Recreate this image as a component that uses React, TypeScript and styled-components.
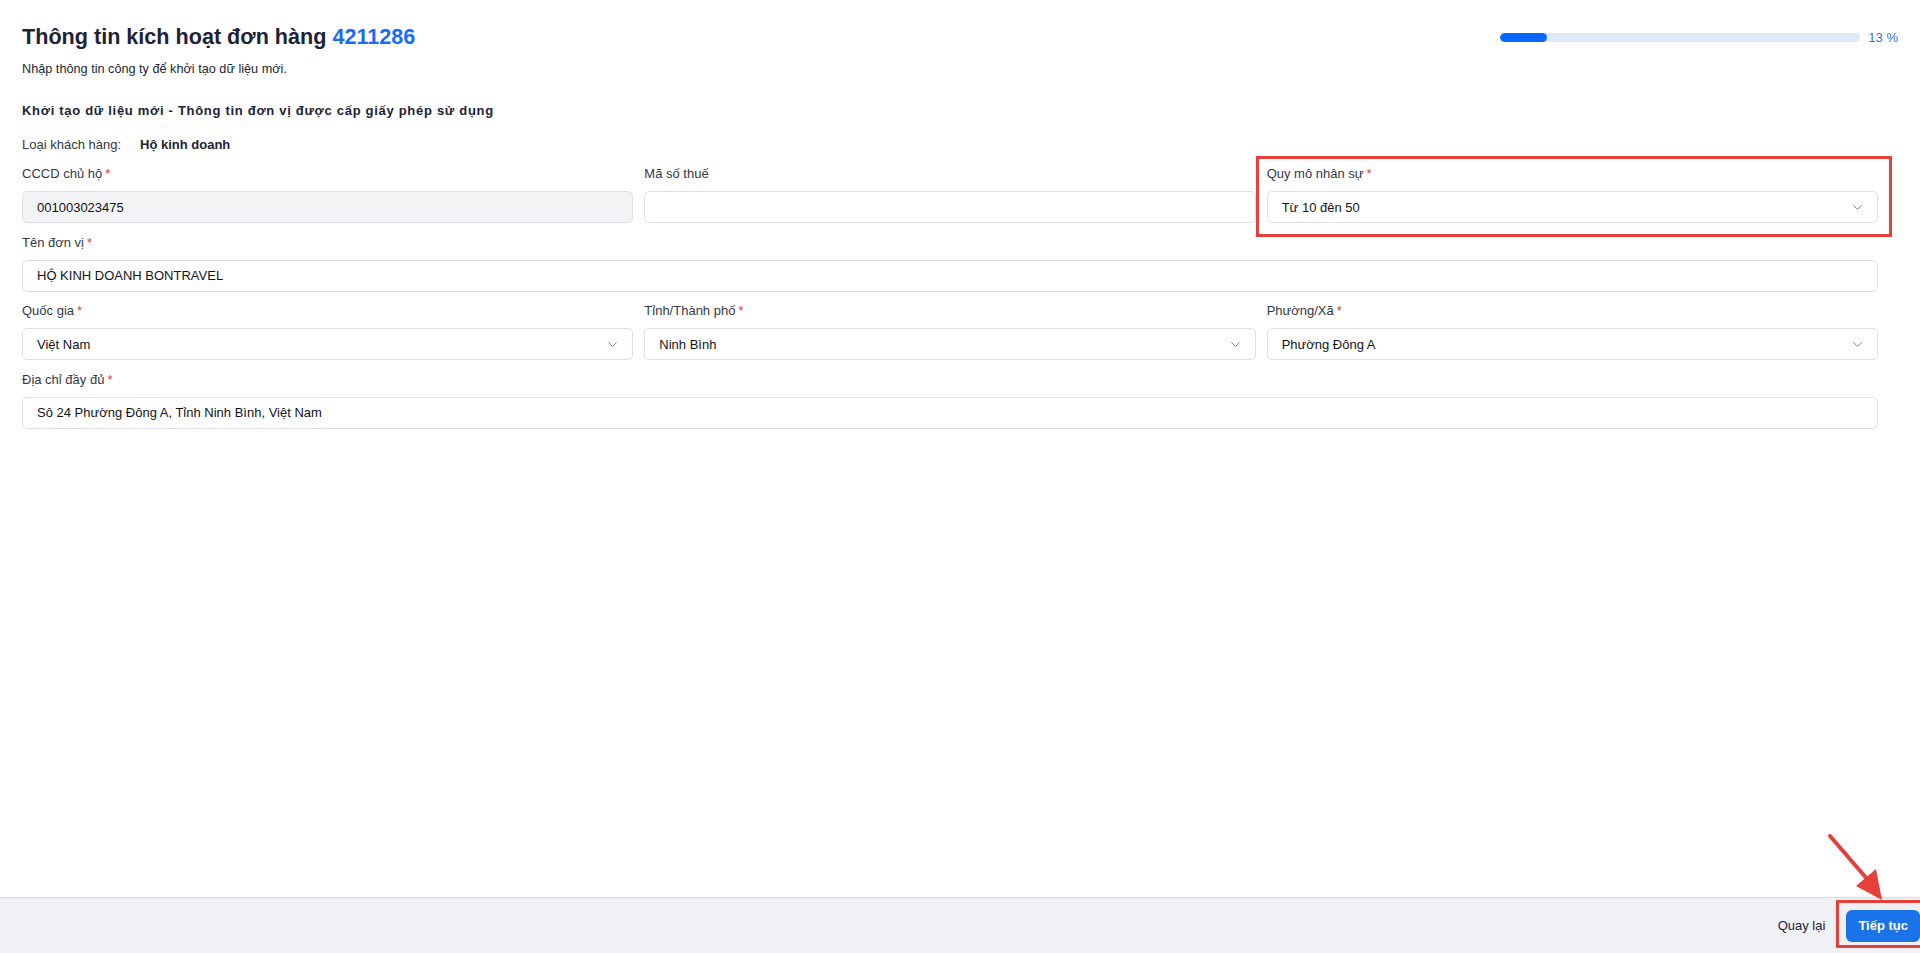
import React from 'react';
import styled, { createGlobalStyle } from 'styled-components';
import { ChevronDown } from 'lucide-react';

const GlobalStyle = createGlobalStyle`
    * { box-sizing: border-box; }
    html, body {
        margin: 0;
        padding: 0;
        background: #ffffff;
        font-family: "Liberation Sans", Arial, sans-serif;
        color: #1d2236;
    }
`

const Page = styled.div`
    min-height: 100vh;
    display: flex;
    flex-direction: column;
`

const Main = styled.main`
    flex: 1;
    padding: 23px 22px 0 22px;
`

const Header = styled.div`
    display: flex;
    justify-content: space-between;
    align-items: center;
`

const Title = styled.h1`
    margin: 0;
    font-size: 21.6px;
    line-height: 28px;
    font-weight: 700;
    color: #1d2236;
`

const OrderNo = styled.span`
    color: #1a6cf5;
`

const Progress = styled.div`
    display: flex;
    align-items: center;
    gap: 8px;
`

const Track = styled.div`
    width: 360px;
    height: 9px;
    border-radius: 5px;
    background: #dce8fc;
    overflow: hidden;
`

const Fill = styled.div`
    height: 100%;
    border-radius: 5px;
    background: #0b66ff;
`

const Percent = styled.span`
    font-size: 13px;
    color: #2f6ff0;
`

const Subtitle = styled.p`
    margin: 9px 0 0;
    font-size: 12.7px;
    line-height: 18px;
    color: #222631;
`

const SectionTitle = styled.h2`
    margin: 24px 0 0;
    font-size: 13px;
    line-height: 18px;
    font-weight: 700;
    letter-spacing: 0.7px;
    color: #1d2236;
`

const InfoRow = styled.div`
    display: flex;
    margin-top: 16px;
    font-size: 13px;
    line-height: 18px;
`

const InfoLabel = styled.span`
    width: 118px;
    color: #333844;
`

const InfoValue = styled.span`
    font-weight: 700;
    color: #1d2236;
`

const Form = styled.div`
    display: grid;
    grid-template-columns: repeat(3, 1fr);
    column-gap: 11px;
    row-gap: 10.5px;
    margin: 11px 20px 0 0;
`

const Field = styled.div<{ $full?: boolean }>`
    position: relative;
    display: flex;
    flex-direction: column;
    grid-column: ${p => (p.$full ? '1 / -1' : 'auto')};
`

const Label = styled.label`
    font-size: 13px;
    line-height: 18px;
    margin-bottom: 8px;
    color: #333844;
`

const Required = styled.span`
    color: #e5393a;
    margin-left: 3px;
`

const Control = styled.div<{ $disabled?: boolean }>`
    height: 32px;
    display: flex;
    align-items: center;
    justify-content: space-between;
    padding: 0 12px 0 14px;
    border: 1px solid #dcdfe4;
    border-radius: 5px;
    background: ${p => (p.$disabled ? '#f3f4f6' : '#ffffff')};
    font-size: 13px;
    color: #111318;
`

const Chevron = styled(ChevronDown)`
    color: #7d828b;
    flex-shrink: 0;
`

// annotation box drawn over the screenshot
const Highlight = styled.div<{ $inset: string }>`
    position: absolute;
    inset: ${p => p.$inset};
    border: 3px solid #e5403a;
    pointer-events: none;
`

const Footer = styled.footer`
    height: 56px;
    display: flex;
    justify-content: flex-end;
    align-items: center;
    gap: 21px;
    padding-right: 0;
    background: #f0f1f4;
    border-top: 1px solid #d9dbe0;
`

const BackButton = styled.button`
    border: none;
    background: none;
    padding: 0;
    font-family: inherit;
    font-size: 13px;
    color: #1d2236;
    cursor: pointer;
`

const NextWrap = styled.div`
    position: relative;
`

const NextButton = styled.button`
    height: 32px;
    padding: 0 12px;
    border: none;
    border-radius: 6px;
    background: #1a73e8;
    color: #ffffff;
    font-family: inherit;
    font-size: 13px;
    font-weight: 700;
    cursor: pointer;
`

const Arrow = styled.svg`
    position: absolute;
    left: -20px;
    top: -78px;
    overflow: visible;
`

type FieldProps = {
    label: string;
    value?: string;
    required?: boolean;
    select?: boolean;
    disabled?: boolean;
    full?: boolean;
    highlight?: boolean;
}

const FormField = ({ label, value, required, select, disabled, full, highlight }: FieldProps) => (
    <Field $full={full}>
        <Label>
            {label}
            {required && <Required>*</Required>}
        </Label>
        <Control $disabled={disabled}>
            <span>{value}</span>
            {select && <Chevron size={15} strokeWidth={1.6} />}
        </Control>
        {highlight && <Highlight $inset="-9px -14px -14px -11px" />}
    </Field>
)

const progress = 13

export default function App() {
    return (
        <Page>
            <GlobalStyle />
            <Main>
                <Header>
                    <Title>
                        Thông tin kích hoạt đơn hàng <OrderNo>4211286</OrderNo>
                    </Title>
                    <Progress>
                        <Track>
                            <Fill style={{ width: `${progress}%` }} />
                        </Track>
                        <Percent>{progress} %</Percent>
                    </Progress>
                </Header>
                <Subtitle>Nhập thông tin công ty để khởi tạo dữ liệu mới.</Subtitle>
                <SectionTitle>Khởi tạo dữ liệu mới - Thông tin đơn vị được cấp giấy phép sử dụng</SectionTitle>
                <InfoRow>
                    <InfoLabel>Loại khách hàng:</InfoLabel>
                    <InfoValue>Hộ kinh doanh</InfoValue>
                </InfoRow>
                <Form>
                    <FormField label="CCCD chủ hộ" required disabled value="001003023475" />
                    <FormField label="Mã số thuế" />
                    <FormField label="Quy mô nhân sự" required select highlight value="Từ 10 đên 50" />
                    <FormField label="Tên đơn vị" required full value="HỘ KINH DOANH BONTRAVEL" />
                    <FormField label="Quốc gia" required select value="Việt Nam" />
                    <FormField label="Tỉnh/Thành phố" required select value="Ninh Bình" />
                    <FormField label="Phường/Xã" required select value="Phường Đông A" />
                    <FormField label="Địa chỉ đầy đủ" required full value="Sô 24 Phường Đông A, Tỉnh Ninh Bình, Việt Nam" />
                </Form>
            </Main>
            <Footer>
                <BackButton>Quay lại</BackButton>
                <NextWrap>
                    <NextButton>Tiếp tục</NextButton>
                    <Highlight $inset="-10px -3px -6px -10px" />
                    <Arrow width="60" height="70" viewBox="0 0 60 70">
                        <line x1="4" y1="4" x2="42" y2="48" stroke="#e5403a" strokeWidth="4" strokeLinecap="round" />
                        <polygon points="56,68 30,54 50,37" fill="#e5403a" />
                    </Arrow>
                </NextWrap>
            </Footer>
        </Page>
    )
}
